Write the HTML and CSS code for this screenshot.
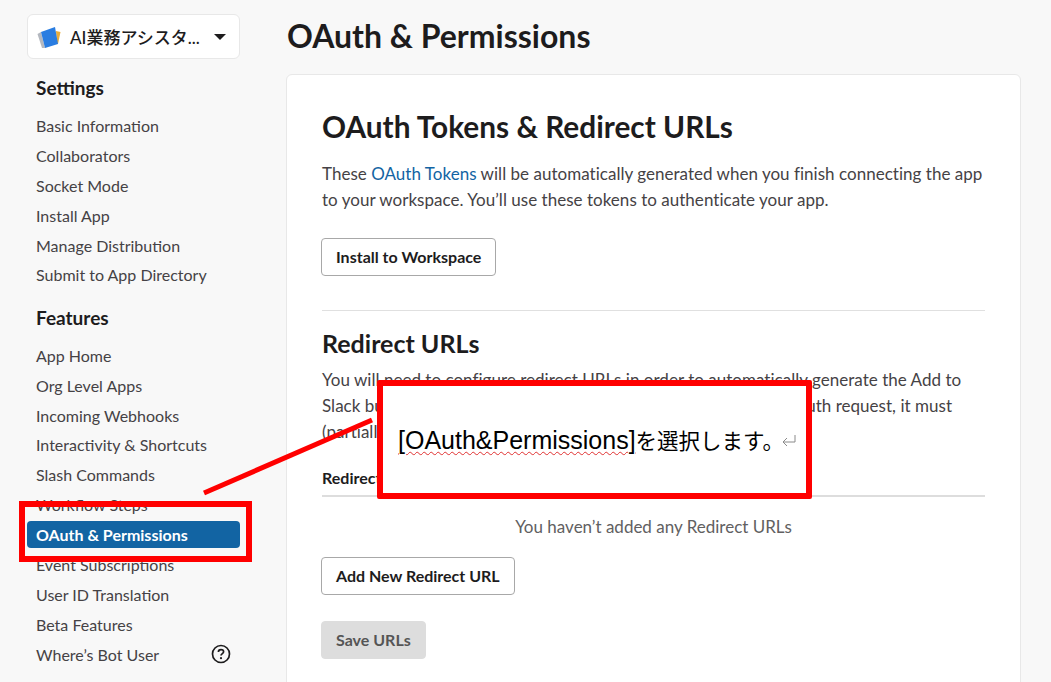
FILE: index.html
```html
<!DOCTYPE html>
<html lang="ja">
<head>
    <meta charset="UTF-8">
    <meta name="viewport" content="width=device-width, initial-scale=1.0">
    <title>OAuth &amp; Permissions</title>
    <link rel="stylesheet" href="styles.css">
</head>
<body>
    <div class="page">
        <nav class="sidebar">
            <div class="app-select">
                <svg class="app-icon" width="24" height="24" viewBox="0 0 24 24">
                    <path d="M0.5 9 L4 7 L8 23 L5 23 Z" fill="#b4b8bf"/>
                    <path d="M19 6 L23.5 7 L21 19 L20 19 Z" fill="#e9ad3c"/>
                    <path d="M4 7 L18 2 L21 19 L8 23 Z" fill="#2a7de1"/>
                </svg>
                <span class="app-name">AI業務アシスタ...</span>
                <span class="caret"></span>
            </div>
            <h3 class="nav-title">Settings</h3>
            <ul class="nav-list">
                <li><a>Basic Information</a></li>
                <li><a>Collaborators</a></li>
                <li><a>Socket Mode</a></li>
                <li><a>Install App</a></li>
                <li><a>Manage Distribution</a></li>
                <li><a>Submit to App Directory</a></li>
            </ul>
            <h3 class="nav-title">Features</h3>
            <ul class="nav-list">
                <li><a>App Home</a></li>
                <li><a>Org Level Apps</a></li>
                <li><a>Incoming Webhooks</a></li>
                <li><a>Interactivity &amp; Shortcuts</a></li>
                <li><a>Slash Commands</a></li>
                <li><a>Workflow Steps</a></li>
                <li><a class="active">OAuth &amp; Permissions</a></li>
                <li><a>Event Subscriptions</a></li>
                <li><a>User ID Translation</a></li>
                <li><a>Beta Features</a></li>
                <li>
                    <a class="with-help">Where’s Bot User
                        <svg width="20" height="20" viewBox="0 0 20 20">
                            <circle cx="10" cy="10" r="8.5" fill="none" stroke="#1d1c1d" stroke-width="1.7"/>
                            <path d="M7.4 8 C7.4 6.4 8.6 5.6 10 5.6 C11.5 5.6 12.6 6.5 12.6 7.8 C12.6 9.6 10 9.6 10 11.6" fill="none" stroke="#1d1c1d" stroke-width="1.7"/>
                            <circle cx="10" cy="14.2" r="1.1" fill="#1d1c1d"/>
                        </svg>
                    </a>
                </li>
            </ul>
        </nav>

        <main class="content">
            <h1 class="page-title">OAuth &amp; Permissions</h1>
            <section class="card">
                <h2 class="card-title">OAuth Tokens &amp; Redirect URLs</h2>
                <p class="text">These <a class="link">OAuth Tokens</a> will be automatically generated when you finish connecting the app to your workspace. You’ll use these tokens to authenticate your app.</p>
                <button class="btn">Install to Workspace</button>
                <hr class="divider">
                <h3 class="sub-title">Redirect URLs</h3>
                <p class="text">You will need to configure redirect URLs in order to automatically generate the Add to Slack button or to distribute your app. If you pass a URL in an OAuth request, it must (partially) match one of the URLs you enter here.</p>
                <div class="table-head">Redirect URLs</div>
                <p class="empty">You haven’t added any Redirect URLs</p>
                <button class="btn">Add New Redirect URL</button>
                <button class="btn btn-disabled">Save URLs</button>
            </section>
        </main>
    </div>

    <!-- annotation layer -->
    <svg class="arrow" width="1051" height="682">
        <line x1="204" y1="493" x2="372" y2="420" stroke="#ff0000" stroke-width="5"/>
    </svg>
    <div class="mark-box"></div>
    <div class="callout">
        <span class="callout-text"><span class="squiggle">[OAuth&amp;Permissions]</span><span class="callout-ja">を選択します。</span></span>
        <svg class="return" width="15" height="13" viewBox="0 0 15 13">
            <path d="M14 1 V8 H2 M6 4 L2 8 L6 12" fill="none" stroke="#8a8a8a" stroke-width="1"/>
        </svg>
    </div>
</body>
</html>
```

FILE: styles.css
```css
* {
    box-sizing: border-box;
}

html, body {
    margin: 0;
    padding: 0;
    height: 682px;
    overflow: hidden;
}

body {
    position: relative;
    background-color: #f8f8f8;
    font-family: 'Lato', 'Noto Sans CJK JP', sans-serif;
    color: #1d1c1d;
}

.page {
    display: flex;
    align-items: flex-start;
}

.sidebar {
    width: 286px;
    flex-shrink: 0;
    padding: 14px 46px 0 27px;
}

.app-select {
    display: flex;
    align-items: center;
    height: 45px;
    padding: 0 13px 0 9px;
    background-color: #fff;
    border: 1px solid #e8e8e8;
    border-radius: 6px;
}

.app-icon {
    flex-shrink: 0;
    margin-right: 9px;
}

.app-name {
    flex: 1;
    font-size: 17px;
    font-weight: 500;
    white-space: nowrap;
}

.caret {
    flex-shrink: 0;
    width: 0;
    height: 0;
    border-left: 6px solid transparent;
    border-right: 6px solid transparent;
    border-top: 6px solid #1d1c1d;
}

.nav-title {
    margin: 17px 0 10.5px 9px;
    font-size: 19px;
    line-height: 24px;
    font-weight: 700;
}

.nav-list + .nav-title {
    margin-top: 16px;
}

.nav-list {
    list-style: none;
    margin: 0;
    padding: 0;
}

.nav-list li {
    display: flex;
    align-items: center;
    height: 29.9px;
}

.nav-list a {
    display: flex;
    align-items: center;
    width: 100%;
    height: 27px;
    padding: 0 9px;
    font-size: 16px;
    color: #454245;
    border-radius: 4px;
    white-space: nowrap;
}

.nav-list a.active {
    background-color: #1264a3;
    color: #fff;
    font-weight: 700;
}

.with-help {
    justify-content: space-between;
}

.content {
    flex: 1;
    padding-right: 30px;
}

.page-title {
    margin: 15px 0 18px 1px;
    font-size: 32px;
    line-height: 41px;
    font-weight: 700;
}

.card {
    display: flex;
    flex-direction: column;
    align-items: flex-start;
    height: 640px;
    padding: 33px 35px;
    background-color: #fff;
    border: 1px solid #e8e8e8;
    border-radius: 6px;
}

.card-title {
    margin: 0 0 15px 0;
    font-size: 29.8px;
    line-height: 38px;
    font-weight: 700;
}

.text {
    margin: 0;
    font-size: 17px;
    line-height: 26px;
    letter-spacing: 0.025px;
    color: #454245;
}

.link {
    color: #1264a3;
}

.btn {
    height: 38px;
    margin-left: -1px;
    padding: 0 14px 2px;
    font-family: inherit;
    font-size: 16px;
    font-weight: 700;
    color: #1d1c1d;
    background-color: #fff;
    border: 1px solid #a8a8a8;
    border-radius: 4px;
}

.text + .btn {
    margin-top: 25px;
}

.btn-disabled {
    margin-top: 26px;
    color: #555;
    background-color: #dddddd;
    border-color: #dddddd;
}

.divider {
    align-self: stretch;
    width: 100%;
    margin: 34px 0 0 0;
    border: none;
    border-top: 1px solid #e0e0e0;
}

.sub-title {
    margin: 16px 0 8px 0;
    font-size: 25px;
    line-height: 32px;
    font-weight: 700;
}

.table-head {
    align-self: stretch;
    height: 32px;
    margin-top: 20px;
    font-size: 16px;
    line-height: 26px;
    font-weight: 700;
    border-bottom: 2px solid #dddddd;
}

.empty {
    align-self: stretch;
    margin: 17px 0 17px 0;
    font-size: 17px;
    line-height: 26px;
    text-align: center;
    color: #616061;
}

/* red annotations drawn over the screenshot */
.arrow {
    position: absolute;
    top: 0;
    left: 0;
    pointer-events: none;
}

.mark-box {
    position: absolute;
    left: 19px;
    top: 501px;
    width: 233px;
    height: 61px;
    border: 6px solid #ff0000;
}

.callout {
    display: flex;
    align-items: center;
    position: absolute;
    left: 377px;
    top: 380px;
    width: 435px;
    height: 119px;
    padding: 2px 0 0 15px;
    background-color: #fff;
    border: 6px solid #ff0000;
    border-radius: 2px;
}

.callout-text {
    font-family: 'Liberation Sans', 'Noto Sans CJK JP', sans-serif;
    font-size: 25px;
    line-height: 30px;
    color: #000;
    white-space: nowrap;
}

.callout-ja {
    font-size: 21.5px;
}

.squiggle {
    text-decoration: underline wavy #e03030 1px;
    text-underline-offset: 2px;
}

.return {
    margin-left: -3px;
}
```
